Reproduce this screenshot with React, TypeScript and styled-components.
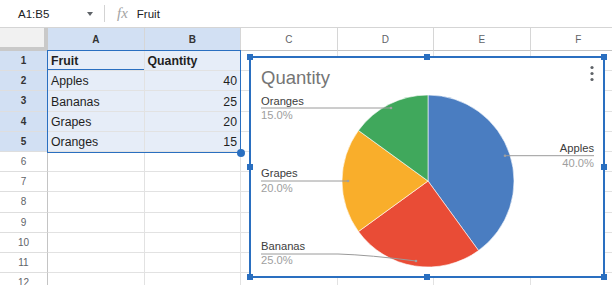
import React from "react";
import styled, { createGlobalStyle } from "styled-components";

const BLUE = "#2a6fc0";

const GlobalStyle = createGlobalStyle`
  html, body { margin: 0; padding: 0; background: #fff; overflow: hidden; }
  body { font-family: "Liberation Sans", Arial, sans-serif; }
`;

const Page = styled.div`
  width: 612px;
  height: 285px;
  overflow: hidden;
  display: flex;
  flex-direction: column;
`;

const FormulaBar = styled.div`
  height: 28px;
  box-sizing: border-box;
  border-bottom: 1px solid #d5d5d5;
  display: flex;
  align-items: center;
  flex-shrink: 0;
`;

const NameBox = styled.div`
  width: 104px;
  box-sizing: border-box;
  padding: 0 11px 0 18px;
  display: flex;
  align-items: center;
  justify-content: space-between;
  font-size: 11.5px;
  color: #202124;
`;

const Caret = styled.span`
  width: 0;
  height: 0;
  border-left: 3.5px solid transparent;
  border-right: 3.5px solid transparent;
  border-top: 4px solid #5f6368;
`;

const Divider = styled.div`
  width: 1px;
  height: 17px;
  background: #d3d3d3;
`;

const Fx = styled.span`
  margin-left: 12px;
  font-family: "Liberation Serif", serif;
  font-style: italic;
  font-size: 15px;
  color: #a3a3a3;
`;

const FormulaText = styled.span`
  margin-left: 9px;
  font-size: 11.5px;
  color: #202124;
`;

const Sheet = styled.div`
  position: relative;
  flex: 1;
`;

const Grid = styled.div`
  display: grid;
  grid-template-columns: 48px repeat(6, 96.5px);
  grid-template-rows: 23px repeat(12, 20.2px);
`;

const Corner = styled.div`
  box-sizing: border-box;
  background: #f1f1f1;
  border-right: 4px solid #c9c9c9;
  border-bottom: 4px solid #c9c9c9;
`;

const ColHeader = styled.div<{ $sel: boolean }>`
  box-sizing: border-box;
  display: flex;
  align-items: center;
  justify-content: center;
  font-size: 10px;
  font-weight: ${(p) => (p.$sel ? "bold" : "normal")};
  color: ${(p) => (p.$sel ? "#333" : "#5f6368")};
  background: ${(p) => (p.$sel ? "#d2e0f3" : "#fff")};
  border-right: 1px solid #d6d6d6;
  border-bottom: 1px solid #c4c4c4;
`;

const RowHeader = styled.div<{ $sel: boolean }>`
  box-sizing: border-box;
  display: flex;
  align-items: center;
  justify-content: center;
  font-size: 10px;
  font-weight: ${(p) => (p.$sel ? "bold" : "normal")};
  color: ${(p) => (p.$sel ? "#333" : "#5f6368")};
  background: ${(p) => (p.$sel ? "#d2e0f3" : "#fff")};
  border-right: 1px solid #c4c4c4;
  border-bottom: 1px solid #dedede;
`;

const Cell = styled.div<{ $sel: boolean; $right: boolean; $bold: boolean; $active: boolean }>`
  box-sizing: border-box;
  display: flex;
  align-items: flex-end;
  justify-content: ${(p) => (p.$right ? "flex-end" : "flex-start")};
  padding: 0 3px 2px;
  font-size: 12.3px;
  font-weight: ${(p) => (p.$bold ? "bold" : "normal")};
  color: #1f1f1f;
  white-space: nowrap;
  overflow: hidden;
  background: ${(p) => (p.$sel ? "#e6edf8" : "#fff")};
  border-right: 1px solid #e2e2e2;
  border-bottom: 1px solid #e2e2e2;
  box-shadow: ${(p) => (p.$active ? `inset 0 -1px 0 ${BLUE}` : "none")};
`;

const SelectionBox = styled.div`
  position: absolute;
  left: 47px;
  top: 22px;
  width: 194px;
  height: 103px;
  box-sizing: border-box;
  border: 1px solid ${BLUE};
  pointer-events: none;
`;

const FillHandle = styled.div`
  position: absolute;
  left: 236.5px;
  top: 120.5px;
  width: 8px;
  height: 8px;
  border-radius: 50%;
  background: ${BLUE};
`;

const ChartFrame = styled.div`
  position: absolute;
  left: 250px;
  top: 29px;
  width: 354px;
  height: 220px;
  background: #fff;
  outline: 2px solid ${BLUE};
  outline-offset: -1px;
`;

const ChartSvg = styled.svg`
  position: absolute;
  left: 0;
  top: 0;
  font-family: "Liberation Sans", Arial, sans-serif;
`;

const Handle = styled.div<{ $x: number; $y: number }>`
  position: absolute;
  width: 6px;
  height: 6px;
  background: ${BLUE};
  left: calc(${(p) => p.$x * 100}% - 3px);
  top: calc(${(p) => p.$y * 100}% - 3px);
`;

const COLS = ["A", "B", "C", "D", "E", "F"];
const DATA: [string, string][] = [
  ["Fruit", "Quantity"],
  ["Apples", "40"],
  ["Bananas", "25"],
  ["Grapes", "20"],
  ["Oranges", "15"],
];

const SLICES = [
  { name: "Apples", value: 40, color: "#4a7dc1" },
  { name: "Bananas", value: 25, color: "#e94c36" },
  { name: "Grapes", value: 20, color: "#f9ae2b" },
  { name: "Oranges", value: 15, color: "#40a85c" },
];

const CX = 178;
const CY = 124;
const R = 86;

function pt(frac: number): [number, number] {
  const a = frac * Math.PI * 2;
  return [CX + R * Math.sin(a), CY - R * Math.cos(a)];
}

const LABELS = [
  { name: "Oranges", pct: "15.0%", x: 11, y: 47.5, anchor: "start", line: "M11,51 L141,51", dot: [141, 51] },
  { name: "Grapes", pct: "20.0%", x: 11, y: 120.3, anchor: "start", line: "M11,124 L98,124", dot: [98, 124] },
  { name: "Bananas", pct: "25.0%", x: 11, y: 193, anchor: "start", line: "M11,197 L88,197 Q120,198 166,204", dot: [166, 204] },
  { name: "Apples", pct: "40.0%", x: 344, y: 95.3, anchor: "end", line: "M255,98.7 L344,98.7", dot: [255, 98.7] },
];

const HANDLES: [number, number][] = [
  [0, 0], [0.5, 0], [1, 0], [0, 0.5], [1, 0.5], [0, 1], [0.5, 1], [1, 1],
];

function PieChart() {
  const total = SLICES.reduce((s, d) => s + d.value, 0);
  let acc = 0;
  const paths = SLICES.map((s) => {
    const start = acc / total;
    acc += s.value;
    const end = acc / total;
    const [x1, y1] = pt(start);
    const [x2, y2] = pt(end);
    const large = end - start > 0.5 ? 1 : 0;
    return (
      <path
        key={s.name}
        d={`M${CX},${CY} L${x1.toFixed(2)},${y1.toFixed(2)} A${R},${R} 0 ${large} 1 ${x2.toFixed(2)},${y2.toFixed(2)} Z`}
        fill={s.color}
        stroke="#fff"
        strokeWidth={0.6}
      />
    );
  });
  return (
    <ChartSvg width={354} height={220} viewBox="0 0 354 220">
      <text x={11} y={27} fontSize={18.5} fill="#757575">Quantity</text>
      <circle cx={342} cy={10.5} r={1.6} fill="#5f6368" />
      <circle cx={342} cy={16.5} r={1.6} fill="#5f6368" />
      <circle cx={342} cy={22.5} r={1.6} fill="#5f6368" />
      {paths}
      {LABELS.map((l) => (
        <g key={l.name}>
          <path d={l.line} fill="none" stroke="#9a9a9a" strokeWidth={1} />
          <circle cx={l.dot[0]} cy={l.dot[1]} r={1.3} fill="#a0a0a0" />
          <text x={l.x} y={l.y} fontSize={11.2} fill="#3c3c3c" textAnchor={l.anchor}>{l.name}</text>
          <text x={l.x} y={l.y + 14.4} fontSize={11.2} fill="#9e9e9e" textAnchor={l.anchor}>{l.pct}</text>
        </g>
      ))}
    </ChartSvg>
  );
}

export default function App() {
  const rows = Array.from({ length: 12 }, (_, i) => i + 1);
  return (
    <>
      <GlobalStyle />
      <Page>
        <FormulaBar>
          <NameBox>
            <span>A1:B5</span>
            <Caret />
          </NameBox>
          <Divider />
          <Fx>fx</Fx>
          <FormulaText>Fruit</FormulaText>
        </FormulaBar>
        <Sheet>
          <Grid>
            <Corner />
            {COLS.map((c, ci) => (
              <ColHeader key={c} $sel={ci < 2}>{c}</ColHeader>
            ))}
            {rows.map((r) => (
              <React.Fragment key={r}>
                <RowHeader $sel={r <= 5}>{r}</RowHeader>
                {COLS.map((c, ci) => {
                  const inRange = r <= 5 && ci < 2;
                  const text = inRange ? DATA[r - 1][ci] : "";
                  return (
                    <Cell
                      key={c}
                      $sel={inRange}
                      $right={ci === 1 && r > 1}
                      $bold={r === 1 && inRange}
                      $active={r === 1 && ci === 0}
                    >
                      {text}
                    </Cell>
                  );
                })}
              </React.Fragment>
            ))}
          </Grid>
          <SelectionBox />
          <FillHandle />
          <ChartFrame>
            <PieChart />
            {HANDLES.map(([x, y]) => (
              <Handle key={`${x}-${y}`} $x={x} $y={y} />
            ))}
          </ChartFrame>
        </Sheet>
      </Page>
    </>
  );
}
